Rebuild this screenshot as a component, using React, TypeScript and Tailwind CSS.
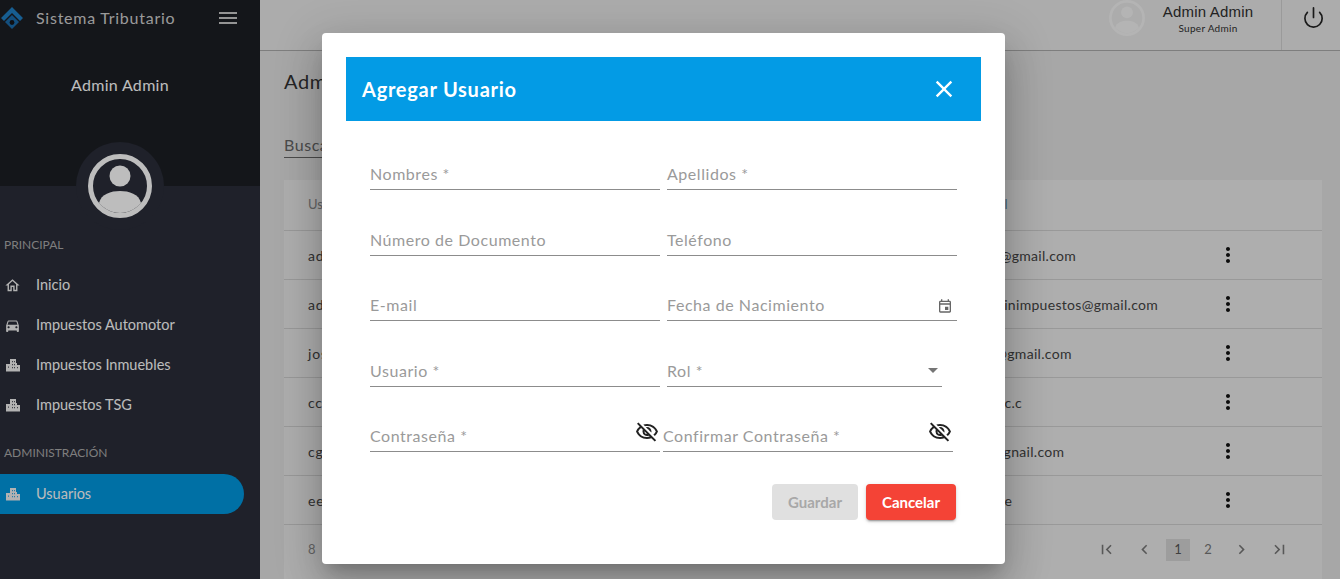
import { Power } from "lucide-react";
import { MdClose, MdMenu, MdMoreVert, MdOutlineEvent, MdOutlineVisibilityOff, MdArrowDropDown, MdFirstPage, MdLastPage, MdChevronLeft, MdChevronRight, MdOutlineHome, MdDirectionsCar } from "react-icons/md";

const UserCircle = ({ className }: { className: string }) => (
  <svg viewBox="0 0 64 64" className={className} fill="currentColor">
    <circle cx="32" cy="32" r="29.5" fill="none" stroke="currentColor" strokeWidth="5" />
    <circle cx="32" cy="22" r="10.5" />
    <path d="M11 49c2-9 12-12 21-12s19 3 21 12c-5 6-13 10-21 10s-16-4-21-10z" />
  </svg>
);

const Logo = () => (
  <svg viewBox="0 0 24 24" className="h-[24px] w-[24px]">
    <path d="M12 1 23 12l-3 3-8-8-8 8-3-3z" fill="#1f7fc4" />
    <path d="M12 9l7 7-7 7-7-7z" fill="#1a6bab" />
    <circle cx="12" cy="16.5" r="2.4" fill="#15161b" />
  </svg>
);

// edificio del menu lateral
const Building = () => (
  <svg viewBox="0 0 16 16" className="h-[16px] w-[16px]" fill="currentColor" fillRule="evenodd">
    <path d="M5 2h6v4h1v2h3v6.5H1V7h4zM7 4v1.2h.8V4zm2 0v1.2h.8V4zM7 7v1.2h.8V7zm2 0v1.2h.8V7zM3 9.500v1.200h.8V9.500zM7 10v1.200h.8V10zm2 0v1.200h.8V10zm3 0v1.200h.8V10z" />
  </svg>
);

const rows = [
  { user: "admin", email: "ana@gmail.com" },
  { user: "adminimpuestos", email: "adminimpuestos@gmail.com" },
  { user: "jose", email: "jos@gmail.com" },
  { user: "ccastro", email: "a@bc.c" },
  { user: "cgomez", email: "cg@gnail.com" },
  { user: "eee", email: "ee@e" },
];

const navMain = [
  { label: "Inicio", icon: <MdOutlineHome size={17} /> },
  { label: "Impuestos Automotor", icon: <MdDirectionsCar size={17} /> },
  { label: "Impuestos Inmuebles", icon: <Building /> },
  { label: "Impuestos TSG", icon: <Building /> },
];

function Field({ label, icon, className }: { label: string; icon?: React.ReactNode; className: string }) {
  return (
    <div className={`flex h-[33px] items-center justify-between border-b border-[#8c8c8c] pt-[2px] ${className}`}>
      <span className="text-[16px] tracking-[0.55px] text-[#9a9a9a]">{label}</span>
      {icon}
    </div>
  );
}

export default function App() {
  return (
    <div className="relative flex h-[579px] w-[1340px] overflow-hidden bg-[#e2e2e2] font-['Lato',sans-serif]">
      {/* Sidebar */}
      <aside className="flex w-[260px] shrink-0 flex-col bg-[#2a2d39] text-[#ffffff]">
        <div className="h-[186px] bg-[#1c1e24]">
          <div className="flex h-[36px] items-center">
            <Logo />
            <span className="ml-[12px] text-[16px] tracking-[0.75px] text-[#d0d0d0]">Sistema Tributario</span>
            <MdMenu className="ml-[41px] text-[#c8c8c8]" size={24} />
          </div>
          <p className="mt-[37px] w-[240px] text-center text-[16px] leading-[24px] tracking-[0.3px]">Admin Admin</p>
        </div>
        <div className="relative flex-1">
          <div className="absolute left-[76px] top-[-44px] flex h-[88px] w-[88px] items-center justify-center rounded-full bg-[#2a2d39]">
            <UserCircle className="h-[64px] w-[64px] text-[#ffffff]" />
          </div>
          <p className="mt-[50px] pl-[4px] text-[12px] leading-[18px] text-[#aaaaaa]">PRINCIPAL</p>
          <nav className="mt-[11px]">
            {navMain.map(({ label, icon }) => (
              <div key={label} className="flex h-[40px] items-center">
                <span className="ml-[4px] flex w-[17px] justify-center text-[#f0f0f0]">{icon}</span>
                <span className="ml-[15px] text-[14.5px] text-[#fdfdfd]">{label}</span>
              </div>
            ))}
          </nav>
          <p className="mt-[19px] pl-[4px] text-[12px] leading-[18px] text-[#aaaaaa]">ADMINISTRACIÓN</p>
          <div className="mt-[12px] flex h-[40px] w-[244px] items-center rounded-r-[20px] bg-[#0097df]">
            <span className="ml-[4px] flex w-[17px] justify-center text-[#f0f0f0]"><Building /></span>
            <span className="ml-[15px] text-[14.5px] text-[#fdfdfd]">Usuarios</span>
          </div>
        </div>
      </aside>

      {/* Main */}
      <main className="flex min-w-0 flex-1 flex-col">
        <header className="flex h-[51px] shrink-0 items-start justify-end border-b border-[#ababab] bg-[#e8e8e8]">
          <UserCircle className="h-[36px] w-[36px] text-[#f3f3f3]" />
          <div className="ml-[9px] w-[108px] pt-[4px] text-center text-[#2f2f2f]">
            <p className="font-['Liberation_Sans',sans-serif] text-[15px] leading-[16px] tracking-[0.2px]">Admin Admin</p>
            <p className="text-[10px] leading-[16px] tracking-[0.3px]">Super Admin</p>
          </div>
          <div className="ml-[19px] flex h-full w-[59px] items-start justify-center border-l border-[#d0d0d0] pl-[4px] pt-[6px]">
            <Power className="text-[#222222]" size={23} strokeWidth={1.75} />
          </div>
        </header>
        <div className="flex flex-1 flex-col pl-[24px] pr-[18px]">
          <h1 className="mt-[18px] text-[20px] leading-[24px] tracking-[0.6px] text-[#333333]">Administración de Usuarios</h1>
          <div className="mt-[25px] h-[40px] w-[250px] border-b border-[#666666] pt-[15px] text-[16px] leading-[24px] tracking-[0.55px] text-[#666666]">Buscar</div>
          <section className="mt-[22px] flex-1 bg-[#ebebeb]">
            <div className="grid h-[51px] grid-cols-[669px_239px_1fr] items-center border-b border-[#cfcfcf] pl-[24px] text-[13px] text-[#888888]">
              <span>Usuario</span>
              <span className="text-[#5f8fae]">Email</span>
            </div>
            {rows.map((row) => (
              <div key={row.user} className="grid h-[49px] grid-cols-[669px_239px_1fr] items-center border-b border-[#cfcfcf] pl-[24px] text-[14px] tracking-[0.3px] text-[#444444]">
                <span className="tracking-[0.8px]">{row.user}</span>
                <span>{row.email}</span>
                <MdMoreVert className="text-[#111111]" size={24} />
              </div>
            ))}
            <div className="flex h-[49px] items-center justify-between pl-[24px] pr-[33px] text-[13px] text-[#888888]">
              <span>8</span>
              <div className="flex items-center text-[#777777]">
                <MdFirstPage size={19} />
                <MdChevronLeft className="ml-[19px]" size={19} />
                <span className="ml-[12px] flex h-[22px] w-[24px] items-center justify-center bg-[#d4d4d4] text-[#555555]">1</span>
                <span className="ml-[6px] w-[24px] text-center">2</span>
                <MdChevronRight className="ml-[12px]" size={19} />
                <MdLastPage className="ml-[19px]" size={19} />
              </div>
            </div>
          </section>
        </div>
      </main>

      {/* Backdrop + dialog */}
      <div className="absolute inset-0 bg-[#000000]/[0.26]" />
      <div className="absolute left-[322px] top-[33px] h-[531px] w-[683px] rounded-[4px] bg-[#ffffff] p-[24px] shadow-[0_11px_15px_-7px_rgba(0,0,0,0.2),0_24px_38px_3px_rgba(0,0,0,0.14),0_9px_46px_8px_rgba(0,0,0,0.12)]">
        <div className="flex h-[64px] items-center justify-between bg-[#039be5] pl-[16px] pr-[23px] text-[#ffffff]">
          <h2 className="text-[20px] font-bold tracking-[0.75px]">Agregar Usuario</h2>
          <MdClose size={28} />
        </div>
        <div className="pl-[24px]">
          <div className="mt-[36px] flex gap-[7px]">
            <Field label="Nombres *" className="w-[290px]" />
            <Field label="Apellidos *" className="w-[290px]" />
          </div>
          <div className="mt-[33px] flex gap-[7px]">
            <Field label="Número de Documento" className="w-[290px]" />
            <Field label="Teléfono" className="w-[290px]" />
          </div>
          <div className="mt-[32px] flex gap-[7px]">
            <Field label="E-mail" className="w-[290px]" />
            <Field label="Fecha de Nacimiento" className="w-[290px]" icon={<MdOutlineEvent className="mr-[4px] mt-[2px] text-[#666666]" size={16} />} />
          </div>
          <div className="mt-[33px] flex gap-[7px]">
            <Field label="Usuario *" className="w-[290px]" />
            <Field label="Rol *" className="w-[275px]" icon={<MdArrowDropDown className="mb-[2px] mr-[-3px] text-[#757575]" size={24} />} />
          </div>
          <div className="mt-[32px] flex gap-[3px]">
            <Field label="Contraseña *" className="w-[290px]" icon={<MdOutlineVisibilityOff className="mb-[8px] mr-[1px] text-[#222222]" size={24} />} />
            <Field label="Confirmar Contraseña *" className="w-[290px]" icon={<MdOutlineVisibilityOff className="mb-[8px] mr-[1px] text-[#222222]" size={24} />} />
          </div>
          <div className="mt-[32px] flex justify-end gap-[8px] pr-[25px]">
            <button className="h-[36px] w-[86px] rounded-[4px] bg-[#e0e0e0] text-[15px] font-bold text-[#a8a8a8]">Guardar</button>
            <button className="h-[36px] w-[90px] rounded-[4px] bg-[#f44336] text-[15px] font-bold text-[#ffffff] shadow-[0_3px_1px_-2px_rgba(0,0,0,0.2),0_2px_2px_0_rgba(0,0,0,0.14),0_1px_5px_0_rgba(0,0,0,0.12)]">Cancelar</button>
          </div>
        </div>
      </div>
    </div>
  );
}
